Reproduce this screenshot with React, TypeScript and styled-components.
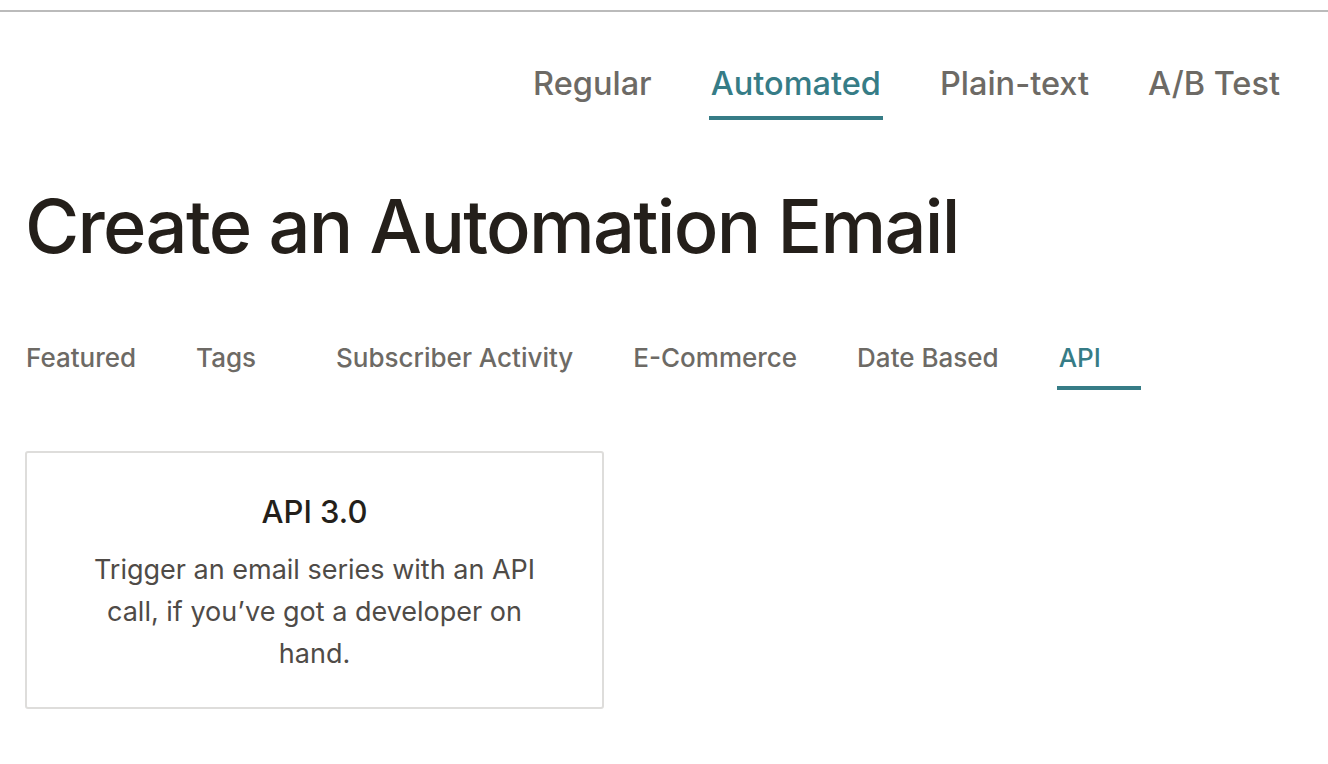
import React from "react";
import styled, { createGlobalStyle } from "styled-components";

const Global = createGlobalStyle`
  html, body { margin: 0; padding: 0; background: #fff; }
  body { font-family: Inter, "Noto Sans", Arial, sans-serif; -webkit-font-smoothing: antialiased; }
`;

const Page = styled.div`
  padding-top: 10px;
`;

const TopRule = styled.div`
  height: 2px;
  background: #bbbbbb;
`;

const TypeNav = styled.nav`
  display: flex;
  justify-content: flex-end;
  gap: 55px;
  padding: 52px 46px 0 0;
`;

const Tab = styled.div<{ $active?: boolean; $size: number; $lh: number; $min?: number; $pad: number }>`
  font-size: ${(p) => p.$size}px;
  line-height: ${(p) => p.$lh}px;
  font-weight: 500;
  color: ${(p) => (p.$active ? "#367c86" : "#6d6a65")};
  padding: 0 2px ${(p) => p.$pad}px;
  min-width: ${(p) => p.$min ?? 0}px;
  box-sizing: border-box;
  border-bottom: 4px solid ${(p) => (p.$active ? "#367c86" : "transparent")};
  white-space: nowrap;
`;

const Heading = styled.h1`
  margin: 62px 0 0 25px;
  font-size: 74px;
  line-height: 88px;
  font-weight: 500;
  color: #241f1a;
  letter-spacing: -1.7px;
`;

const CategoryNav = styled.nav`
  display: flex;
  gap: 56px;
  padding: 0 0 0 24px;
  margin-top: 72px;
`;

const CardGrid = styled.div`
  display: grid;
  grid-template-columns: 579px;
  padding: 0 0 0 25px;
  margin-top: 61px;
`;

const Card = styled.div`
  border: 2px solid #dedddb;
  border-radius: 3px;
  height: 258px;
  box-sizing: border-box;
  display: flex;
  flex-direction: column;
  align-items: center;
  text-align: center;
  padding: 40px 56px 0;
`;

const CardTitle = styled.div`
  font-size: 31px;
  line-height: 38px;
  font-weight: 500;
  color: #241f1a;
`;

const CardText = styled.p`
  margin: 18px 0 0;
  font-size: 27px;
  font-weight: 400;
  color: #4f4b47;
  line-height: 42px;
`;

const types = ["Regular", "Automated", "Plain-text", "A/B Test"];
const cats = ["Featured", "Tags", "Subscriber Activity", "E-Commerce", "Date Based", "API"];

export default function App() {
  return (
    <Page>
      <Global />
      <TopRule />
      <TypeNav>
        {types.map((t) => (
          <Tab key={t} $active={t === "Automated"} $size={32.5} $lh={40} $pad={12}>
            {t}
          </Tab>
        ))}
      </TypeNav>
      <Heading>Create an Automation Email</Heading>
      <CategoryNav>
        {cats.map((c) => (
          <Tab key={c} $active={c === "API"} $size={26} $lh={32} $min={84} $pad={12}>
            {c}
          </Tab>
        ))}
      </CategoryNav>
      <CardGrid>
        <Card>
          <CardTitle>API 3.0</CardTitle>
          <CardText>
            Trigger an email series with an API call, if you’ve got a developer on hand.
          </CardText>
        </Card>
      </CardGrid>
    </Page>
  );
}
